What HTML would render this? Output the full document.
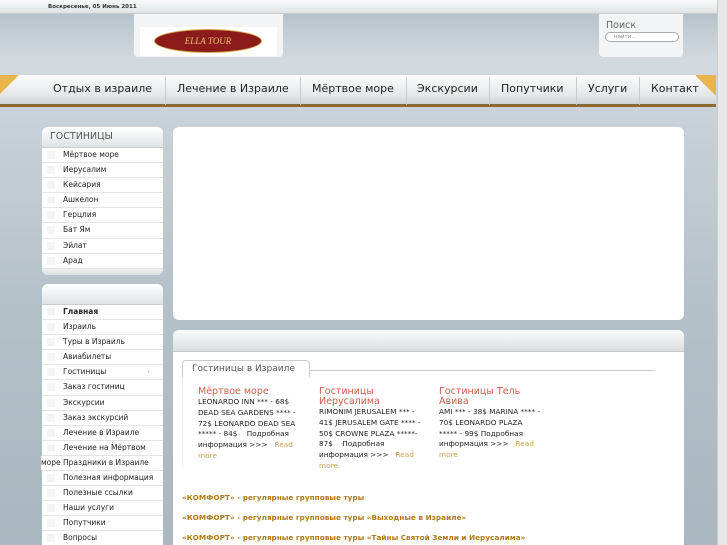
<!DOCTYPE html>
<html style="overflow:hidden;height:545px"><head><meta charset="utf-8"><style>
*{margin:0;padding:0;box-sizing:border-box}
body{width:727px;height:545px;overflow:hidden;position:relative;font-family:"DejaVu Sans","Liberation Sans",sans-serif;background:linear-gradient(#aebbc4 0,#d3dadf 60px,#c9d2d8 110px,#b5c1c9 300px,#aab7c0 545px)}
.top{position:absolute;left:0;top:0;width:717px;height:14px;background:linear-gradient(#fafafa,#dfe3e6);border-bottom:1px solid #c5ccd1;color:#333}
.top span{position:absolute;left:48px;top:4px;font-size:5.5px;font-weight:bold}
.sb{position:absolute;right:0;top:0;width:10px;height:545px;background:#e8e8e8;border-left:1px solid #ccc}
.logo{position:absolute;left:134px;top:14px;width:149px;height:43px;background:#f3f4f5;border-radius:0 0 4px 4px}
.logo div{position:absolute;left:6px;top:13px;width:137px;height:29px;background:#fff}
.logo i{position:absolute;left:15px;top:3px;width:106px;height:22px;border-radius:50%;background:#8b1a1a;color:#e8c870;font-size:9px;font-style:italic;font-family:"Liberation Serif",serif;text-align:center;line-height:22px;box-shadow:0 0 0 1px #d4a84a}
.search{position:absolute;left:599px;top:14px;width:84px;height:43px;background:#f3f4f5;border-radius:0 0 4px 4px}
.search b{position:absolute;left:7px;top:6px;font-weight:normal;font-size:9.5px;color:#666}
.search span{position:absolute;left:6px;top:18px;width:74px;height:10px;border:1px solid #aaa;border-radius:5px;background:#fff;font-size:5.5px;color:#888;padding-left:8px;line-height:8px}
.nav{position:absolute;left:0;top:75px;width:716px;height:32px;background:linear-gradient(#fdfdfd,#e4e6e8 70%,#cfd2d5);border-bottom:3px solid #8a6a35}
.nav:before{content:"";position:absolute;left:0;top:0;width:30px;height:32px;background:linear-gradient(135deg,#e7b54a 30%,transparent 31%)}
.nav:after{content:"";position:absolute;right:0;top:0;width:20px;height:32px;background:linear-gradient(225deg,#e7b54a 40%,transparent 41%)}
.nav a{position:absolute;top:7px;font-size:11px;color:#222;white-space:nowrap}
.nav s{position:absolute;top:2px;width:1px;height:28px;background:#c8cbce}
.box{position:absolute;background:#fff;border-radius:6px;overflow:hidden}
.lb{left:42px;width:121px}
.hd{height:21px;background:linear-gradient(#fff,#dfe2e4);border-bottom:1px solid #ccc;font-size:9.5px;color:#555;padding:4px 0 0 8px}
.it{height:15.1px;border-bottom:1px solid #e4e4e4;font-size:7.5px;color:#222;padding-left:21px;line-height:14px;position:relative}
.it:before{content:"";position:absolute;left:5px;top:3px;width:8px;height:8px;background:#f4f4f4}
.ft{height:8px;background:linear-gradient(#eef0f1,#d6dadd)}
.rm{color:#c9a050}
.h3{color:#c8604a;font-size:9.5px;line-height:10px}
.col{position:absolute;top:387px;width:104px;font-size:7.3px;line-height:10.8px;color:#222}
.lk{position:absolute;left:182px;font-size:7.3px;font-weight:bold;color:#b07a18}
</style></head><body>
<div class="top"><span>Воскресенье, 05 Июнь 2011</span></div>
<div class="sb"></div>
<div class="logo"><div><i>ELLA TOUR</i></div></div>
<div class="search"><b>Поиск</b><span>найти...</span></div>
<div class="nav">
<a style="left:53px">Отдых в израиле</a><s style="left:165px"></s>
<a style="left:177px">Лечение в Израиле</a><s style="left:300px"></s>
<a style="left:312px">Мёртвое море</a><s style="left:406px"></s>
<a style="left:417px">Экскурсии</a><s style="left:489px"></s>
<a style="left:501px">Попутчики</a><s style="left:576px"></s>
<a style="left:588px">Услуги</a><s style="left:639px"></s>
<a style="left:651px">Контакт</a>
</div>
<div class="box lb" style="top:127px;height:148px">
<div class="hd">ГОСТИНИЦЫ</div>
<div class="it">Мёртвое море</div><div class="it">Иерусалим</div><div class="it">Кейсария</div><div class="it">Ашкелон</div><div class="it">Герцлия</div><div class="it">Бат Ям</div><div class="it">Эйлат</div><div class="it">Арад</div>
<div class="ft"></div></div>
<div class="box lb" style="top:284px;height:270px;overflow:visible">
<div class="hd" style="border-radius:6px 6px 0 0"></div>
<div class="it" style="font-weight:bold">Главная</div><div class="it">Израиль</div><div class="it">Туры в Израиль</div><div class="it">Авиабилеты</div><div class="it">Гостиницы<span style="position:absolute;left:105px;color:#aaa">‹</span></div><div class="it">Заказ гостиниц</div><div class="it">Экскурсии</div><div class="it">Заказ экскурсий</div><div class="it">Лечение в Израиле</div><div class="it">Лечение на Мёртвом</div><div class="it"><span style="position:absolute;left:-1px;background:#fff">море</span>Праздники в Израиле</div><div class="it">Полезная информация</div><div class="it">Полезные ссылки</div><div class="it">Наши услуги</div><div class="it">Попутчики</div><div class="it">Вопросы</div>
</div>
<div class="box" style="left:173px;top:127px;width:511px;height:193px"></div>
<div class="box" style="left:173px;top:330px;width:511px;height:230px">
<div style="height:22px;background:linear-gradient(#fafafa,#dcdfe1);border-bottom:1px solid #c8c8c8"></div></div>
<div style="position:absolute;left:182px;top:360px;width:128px;height:17px;border:1px solid #ccc;border-bottom:none;border-radius:4px 4px 0 0;background:#fff;font-size:9px;color:#555;padding:3px 0 0 9px">Гостиницы в Израиле</div>
<div style="position:absolute;left:310px;top:370px;width:345px;height:1px;background:#ccc"></div>
<div style="position:absolute;left:182px;top:377px;width:1px;height:90px;background:#eee"></div>
<div class="col" style="left:198px"><div class="h3">Мёртвое море</div>LEONARDO INN *** - 68$ DEAD SEA GARDENS **** - 72$ LEONARDO DEAD SEA ***** - 84$ &nbsp;&nbsp; Подробная информация &gt;&gt;&gt; &nbsp; <span class="rm">Read more</span></div>
<div class="col" style="left:319px"><div class="h3">Гостиницы Иерусалима</div>RIMONIM JERUSALEM *** - 41$ JERUSALEM GATE **** - 50$ CROWNE PLAZA *****- 87$ &nbsp;&nbsp; Подробная информация &gt;&gt;&gt; &nbsp; <span class="rm">Read more</span></div>
<div class="col" style="left:439px"><div class="h3">Гостиницы Тель Авива</div>AMI *** - 38$ MARINA **** - 70$ LEONARDO PLAZA ***** - 99$ Подробная информация &gt;&gt;&gt; &nbsp; <span class="rm">Read more</span></div>
<div class="lk" style="top:493px">«КОМФОРТ» - регулярные групповые туры</div>
<div class="lk" style="top:513px">«КОМФОРТ» - регулярные групповые туры «Выходные в Израиле»</div>
<div class="lk" style="top:533px">«КОМФОРТ» - регулярные групповые туры «Тайны Святой Земли и Иерусалима»</div>
</body></html>
